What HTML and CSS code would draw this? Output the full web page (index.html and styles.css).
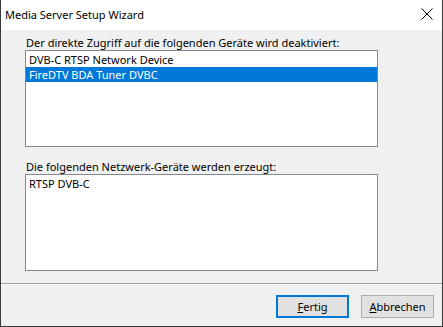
FILE: index.html
```html
<!DOCTYPE html>
<html>
<head>
<meta charset="utf-8">
<link rel="stylesheet" href="styles.css">
</head>
<body>
<div class="window">
  <div class="titlebar">
    <span class="title">Media Server Setup Wizard</span>
    <svg class="close" width="12" height="12" viewBox="0 0 12 12"><path d="M0.5 0.5 L11.5 11.5 M11.5 0.5 L0.5 11.5" stroke="#000" stroke-width="1" fill="none"/></svg>
  </div>
  <div class="main">
    <div class="label">Der direkte Zugriff auf die folgenden Geräte wird deaktiviert:</div>
    <div class="listbox">
      <div class="item">DVB-C RTSP Network Device</div>
      <div class="item selected">FireDTV BDA Tuner DVBC</div>
    </div>
    <div class="label second">Die folgenden Netzwerk-Geräte werden erzeugt:</div>
    <div class="listbox">
      <div class="item">RTSP DVB-C</div>
    </div>
  </div>
  <div class="separator"></div>
  <div class="footer">
    <button class="btn default"><u>F</u>ertig</button>
    <button class="btn"><u>A</u>bbrechen</button>
  </div>
</div>
</body>
</html>
```

FILE: styles.css
```css
html, body {
  margin: 0;
  padding: 0;
}
body {
  font-family: "Noto Sans", "Liberation Sans", sans-serif;
  font-size: 11px;
  color: #000;
  background: #f0f0f0;
}
.window {
  box-sizing: border-box;
  width: 443px;
  height: 327px;
  background: #f0f0f0;
  border-left: 1px solid #3a3a3a;
  border-right: 1px solid #3a3a3a;
  border-bottom: 1px solid #3a3a3a;
  display: flex;
  flex-direction: column;
}
.titlebar {
  height: 30px;
  background: #fff;
  display: flex;
  align-items: center;
  justify-content: space-between;
  padding: 0 9px 0 4px;
  flex: none;
}
.title {
  font-size: 11px;
  line-height: 15px;
  margin-top: -2px;
}
.close {
  display: block;
  margin-top: -3px;
}
.main {
  padding: 5px 64px 0 24px;
  display: flex;
  flex-direction: column;
}
.label {
  height: 15px;
  line-height: 15px;
  padding-left: 1px;
  white-space: nowrap;
}
.label.second {
  margin-top: 12px;
}
.listbox {
  box-sizing: border-box;
  height: 97px;
  background: #fff;
  border: 1px solid #828790;
  padding-top: 1px;
}
.item {
  height: 15px;
  line-height: 15px;
  padding-left: 3px;
  white-space: nowrap;
}
.item.selected {
  background: #0078d7;
  color: #fff;
}
.separator {
  margin-top: 12px;
  height: 1px;
  background: #a0a0a0;
  border-bottom: 1px solid #fff;
  flex: none;
}
.footer {
  display: flex;
  justify-content: flex-end;
  gap: 12px;
  padding: 10px 8px 0 0;
}
.btn {
  box-sizing: border-box;
  width: 73px;
  height: 23px;
  font-family: inherit;
  font-size: 11px;
  color: #000;
  background: #e1e1e1;
  border: 1px solid #adadad;
  padding: 0;
  margin: 0;
}
.btn.default {
  border: 2px solid #0078d7;
}
```
